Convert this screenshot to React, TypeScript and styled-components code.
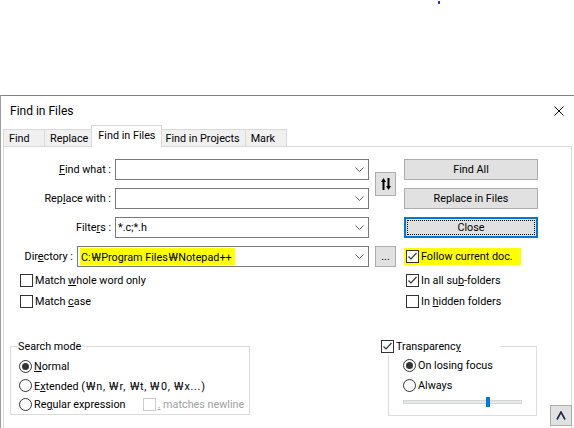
import React from 'react';
import styled, { createGlobalStyle, css } from 'styled-components';

const FONT = `Roboto, "Noto Sans", "Noto Sans CJK KR", sans-serif`;

const GlobalStyle = createGlobalStyle`
  * { box-sizing: border-box; }
  html, body { margin: 0; padding: 0; background: #fff; }
  body { font-family: ${FONT}; font-size: 10.8px; color: #000; }
`;

const Screen = styled.div`
  width: 574px;
  height: 428px;
  display: flex;
  flex-direction: column;
  overflow: hidden;
`;

const Desktop = styled.div`
  position: relative;
  height: 95px;
  flex-shrink: 0;
`;

const StrayPixel = styled.span`
  position: absolute;
  left: 438px;
  top: 1px;
  width: 2px;
  height: 3px;
  background: #2b2bff;
`;

const Dialog = styled.div`
  flex: 1;
  min-height: 0;
  display: flex;
  flex-direction: column;
  border-top: 1px solid #838383;
  border-left: 1px solid #9c9c9c;
`;

const TitleBar = styled.div`
  height: 29px;
  flex-shrink: 0;
  display: flex;
  align-items: center;
  justify-content: space-between;
  padding: 0 10px 0 9px;
  font-size: 12px;
`;

const TabStrip = styled.div`
  height: 21px;
  flex-shrink: 0;
  display: flex;
  align-items: flex-end;
  padding-left: 2px;
  position: relative;
  z-index: 1;
`;

const Tab = styled.div<{ $active?: boolean }>`
  height: 17px;
  min-width: 42px;
  padding: 0 5px;
  margin-left: -1px;
  display: flex;
  align-items: center;
  border: 1px solid #d9d9d9;
  border-bottom: none;
  background: #f0f0f0;
  white-space: nowrap;
  &:first-child { margin-left: 0; }
  ${p => p.$active && css`
    height: 22px;
    margin: 0 -2px -1px -3px;
    padding: 0 6px 3px;
    background: #fff;
    position: relative;
    z-index: 2;
  `}
`;

const Panel = styled.div`
  flex: 1;
  min-height: 0;
  margin: 0 2px;
  padding-top: 12px;
  border: 1px solid #d9d9d9;
  border-bottom: none;
  background: #fff;
  display: flex;
  flex-direction: column;
`;

const FormGrid = styled.div<{ $rows: number; $gap: number }>`
  display: grid;
  grid-template-columns: 365px 23px 134px;
  grid-template-rows: repeat(${p => p.$rows}, 21px);
  column-gap: 6px;
  row-gap: ${p => p.$gap}px;
`;

const OptionsGrid = styled(FormGrid)`
  margin-top: 3px;
`;

const FieldRow = styled.div`
  grid-column: 1;
  display: flex;
  align-items: center;
  justify-content: flex-end;
  gap: 4px;
`;

const FieldLabel = styled.span`
  white-space: nowrap;
`;

const Key = styled.span`
  text-decoration: underline;
  text-underline-offset: 1px;
`;

// the Korean UI font draws the path separator as a wide won sign
const Won = styled.span`
  display: inline-block;
  width: 10.5px;
  text-align: center;
  font-family: "Noto Sans", "Noto Sans CJK KR", sans-serif;
  transform: scaleX(1.3);
`;

const EscapeList = styled.span`
  letter-spacing: 0.7px;
`;

const Combo = styled.div<{ $width: number }>`
  width: ${p => p.$width}px;
  height: 21px;
  border: 1px solid #7a7a7a;
  background: #fff;
  display: flex;
  align-items: center;
  justify-content: space-between;
  padding: 0 4px 0 2px;
`;

const ComboText = styled.span`
  white-space: nowrap;
`;

const Marker = styled.span`
  background: #ffff00;
  box-shadow: 0 -3px 0 #ffff00, 0 1px 0 #ffff00;
  padding: 0 3px 0 1px;
`;

const buttonBase = css`
  background: #e1e1e1;
  border: 1px solid #adadad;
  display: flex;
  align-items: center;
  justify-content: center;
  white-space: nowrap;
`;

const SideButton = styled.div<{ $row: string; $height: number }>`
  ${buttonBase}
  grid-column: 2;
  grid-row: ${p => p.$row};
  align-self: center;
  justify-self: start;
  width: 21px;
  height: ${p => p.$height}px;
`;

const ActionButton = styled.div<{ $row: number; $default?: boolean }>`
  ${buttonBase}
  grid-column: 3;
  grid-row: ${p => p.$row};
  height: 21px;
  ${p => p.$default && css`
    border: 2px solid #0078d7;
    padding: 1px;
  `}
`;

const FocusRing = styled.span`
  width: 100%;
  height: 100%;
  border: 1px dotted #000;
  display: flex;
  align-items: center;
  justify-content: center;
`;

const CheckOption = styled.div<{ $col: number; $row: number; $indent: number; $marked?: boolean }>`
  grid-column: ${p => p.$col};
  grid-row: ${p => p.$row};
  justify-self: start;
  align-self: center;
  margin-left: ${p => p.$indent}px;
  display: flex;
  align-items: center;
  gap: 2px;
  white-space: nowrap;
  ${p => p.$marked && css`
    background: #ffff00;
    margin-left: 0;
    padding: 2px 8px 2px ${p.$indent}px;
  `}
`;

const Box = styled.span<{ $disabled?: boolean }>`
  width: 13px;
  height: 13px;
  flex-shrink: 0;
  border: 1px solid ${p => (p.$disabled ? '#cccccc' : '#333')};
  background: #fff;
  display: flex;
  align-items: center;
  justify-content: center;
`;

const BottomRow = styled.div`
  height: 88px;
  margin-top: 26px;
  padding-left: 6px;
  display: flex;
  align-items: flex-start;
`;

const GroupBox = styled.fieldset<{ $width: number; $indent: number; $top: number; $bottom: number }>`
  width: ${p => p.$width}px;
  min-width: 0;
  margin: 0;
  padding: ${p => p.$top}px 6px ${p => p.$bottom}px ${p => p.$indent}px;
  border: 1px solid #dcdcdc;
`;

const TransparencyBox = styled(GroupBox)`
  margin-left: auto;
`;

const GroupLegend = styled.legend<{ $shift: number; $width?: number }>`
  margin-left: ${p => p.$shift}px;
  padding: 0 1px;
  line-height: 17px;
  background: #fff;
  ${p => p.$width && css`width: ${p.$width}px;`}
`;

const LegendCheck = styled.span`
  display: flex;
  align-items: center;
  gap: 2px;
`;

const RadioRow = styled.div<{ $height: number }>`
  height: ${p => p.$height}px;
  display: flex;
  align-items: center;
  gap: 2px;
  white-space: nowrap;
`;

const Radio = styled.span<{ $on?: boolean }>`
  width: 13px;
  height: 13px;
  flex-shrink: 0;
  border-radius: 50%;
  border: 1px solid #333;
  display: flex;
  align-items: center;
  justify-content: center;
  &::after {
    content: '';
    width: 7px;
    height: 7px;
    border-radius: 50%;
    background: ${p => (p.$on ? '#333' : 'transparent')};
  }
`;

const InlineCheck = styled.span`
  display: flex;
  align-items: center;
  gap: 2px;
  margin-left: 15px;
  color: #a0a0a0;
`;

const SliderRow = styled.div`
  height: 14px;
  display: flex;
  align-items: center;
`;

const SliderTrack = styled.div`
  position: relative;
  width: 119px;
  height: 4px;
  background: #e7eaea;
  border: 1px solid #d6d6d6;
`;

const SliderThumb = styled.span<{ $pos: number }>`
  position: absolute;
  left: ${p => p.$pos}px;
  top: -4px;
  width: 4px;
  height: 10px;
  background: #0078d7;
`;

const CollapseButton = styled.div`
  ${buttonBase}
  width: 22px;
  height: 21px;
  margin-left: 13px;
  margin-right: -1px;
  align-self: flex-end;
`;

const Chevron = () => (
  <svg width="9" height="5" viewBox="0 0 9 5">
    <polyline points="0.5,0.5 4.5,4.5 8.5,0.5" fill="none" stroke="#606060" strokeWidth="1" />
  </svg>
);

const CheckMark = () => (
  <svg width="11" height="11" viewBox="0 0 11 11">
    <polyline points="1.5,5.5 4,8 9.5,2" fill="none" stroke="#333" strokeWidth="1.2" />
  </svg>
);

const CloseIcon = () => (
  <svg width="10" height="10" viewBox="0 0 10 10">
    <path d="M0.5 0.5 L9.5 9.5 M9.5 0.5 L0.5 9.5" stroke="#000" strokeWidth="1" />
  </svg>
);

const SwapIcon = () => (
  <svg width="10" height="12" viewBox="0 0 10 12">
    <path d="M0 4 L2.5 0 L5 4 L3.5 4 L3.5 12 L1.5 12 L1.5 4 Z" fill="#000" />
    <path d="M5 8 L6.5 8 L6.5 0 L8.5 0 L8.5 8 L10 8 L7.5 12 Z" fill="#000" />
  </svg>
);

const CaretUp = () => (
  <svg width="10" height="9" viewBox="0 0 10 9">
    <polyline points="1,8.5 5,1 9,8.5" fill="none" stroke="#1c2750" strokeWidth="1.6" />
  </svg>
);

type FieldProps = { label: React.ReactNode; width: number; value?: React.ReactNode };

const Field: React.FC<FieldProps> = ({ label, width, value }) => (
  <FieldRow>
    <FieldLabel>{label}</FieldLabel>
    <Combo $width={width}>
      <ComboText>{value}</ComboText>
      <Chevron />
    </Combo>
  </FieldRow>
);

const App: React.FC = () => (
  <>
    <GlobalStyle />
    <Screen>
      <Desktop>
        <StrayPixel />
      </Desktop>
      <Dialog>
        <TitleBar>
          <span>Find in Files</span>
          <CloseIcon />
        </TitleBar>
        <TabStrip>
          <Tab>Find</Tab>
          <Tab>Replace</Tab>
          <Tab $active>Find in Files</Tab>
          <Tab>Find in Projects</Tab>
          <Tab>Mark</Tab>
        </TabStrip>
        <Panel>
          <FormGrid $rows={4} $gap={8}>
            <Field label={<><Key>F</Key>ind what :</>} width={254} />
            <Field label={<>Rep<Key>l</Key>ace with :</>} width={254} />
            <Field label={<>Filte<Key>r</Key>s :</>} width={254} value="*.c;*.h" />
            <Field
              label={<>Dir<Key>e</Key>ctory :</>}
              width={292}
              value={<Marker>C:<Won>₩</Won>Program Files<Won>₩</Won>Notepad++</Marker>}
            />
            <SideButton $row="1 / span 2" $height={24}><SwapIcon /></SideButton>
            <SideButton $row="4" $height={21}>...</SideButton>
            <ActionButton $row={1}>Find All</ActionButton>
            <ActionButton $row={2}>Replace in Files</ActionButton>
            <ActionButton $row={3} $default><FocusRing>Close</FocusRing></ActionButton>
            <CheckOption $col={3} $row={4} $indent={2} $marked>
              <Box><CheckMark /></Box><span>Follow current doc.</span>
            </CheckOption>
          </FormGrid>
          <OptionsGrid $rows={2} $gap={0}>
            <CheckOption $col={1} $row={1} $indent={16}>
              <Box /><span>Match <Key>w</Key>hole word only</span>
            </CheckOption>
            <CheckOption $col={1} $row={2} $indent={16}>
              <Box /><span>Match <Key>c</Key>ase</span>
            </CheckOption>
            <CheckOption $col={3} $row={1} $indent={2}>
              <Box><CheckMark /></Box><span>In all su<Key>b</Key>-folders</span>
            </CheckOption>
            <CheckOption $col={3} $row={2} $indent={2}>
              <Box /><span>In <Key>h</Key>idden folders</span>
            </CheckOption>
          </OptionsGrid>
          <BottomRow>
            <GroupBox $width={240} $indent={8} $top={1.5} $bottom={0}>
              <GroupLegend $shift={-2}>Search mode</GroupLegend>
              <RadioRow $height={19.5}><Radio $on /><span><Key>N</Key>ormal</span></RadioRow>
              <RadioRow $height={19.5}>
                <Radio />
                <span>
                  E<Key>x</Key>tended{' '}
                  <EscapeList>
                    (<Won>₩</Won>n, <Won>₩</Won>r, <Won>₩</Won>t, <Won>₩</Won>0, <Won>₩</Won>x...)
                  </EscapeList>
                </span>
              </RadioRow>
              <RadioRow $height={18}>
                <Radio /><span>Re<Key>g</Key>ular expression</span>
                <InlineCheck><Box $disabled /><span><Key>.</Key> matches newline</span></InlineCheck>
              </RadioRow>
            </GroupBox>
            <TransparencyBox $width={149} $indent={14} $top={0} $bottom={6}>
              <GroupLegend $shift={-23} $width={120}>
                <LegendCheck><Box><CheckMark /></Box><span>Transparenc<Key>y</Key></span></LegendCheck>
              </GroupLegend>
              <RadioRow $height={20}><Radio $on /><span>On losing focus</span></RadioRow>
              <RadioRow $height={20}><Radio /><span>Always</span></RadioRow>
              <SliderRow>
                <SliderTrack><SliderThumb $pos={82} /></SliderTrack>
              </SliderRow>
            </TransparencyBox>
            <CollapseButton><CaretUp /></CollapseButton>
          </BottomRow>
        </Panel>
      </Dialog>
    </Screen>
  </>
);

export default App;
